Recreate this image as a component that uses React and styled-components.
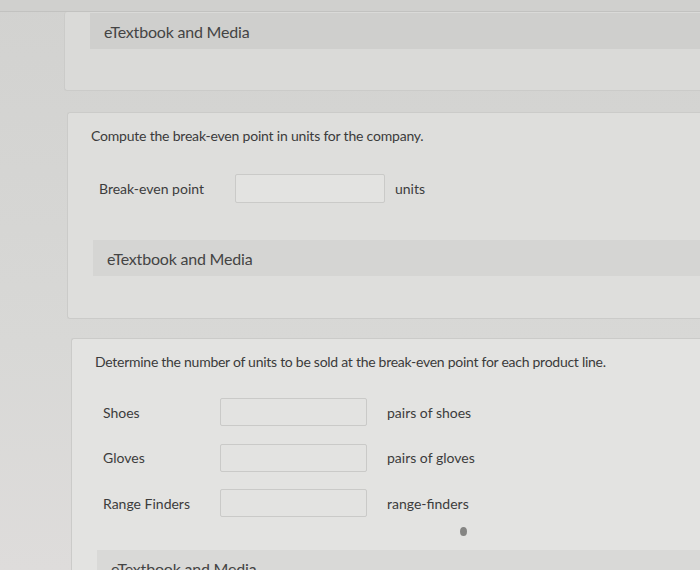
import React from "react"
import styled, { createGlobalStyle } from "styled-components"

const Global = createGlobalStyle`
  html, body {
    margin: 0;
    padding: 0;
    overflow: hidden;
    background: #d6d6d4;
  }
  body {
    font-family: Lato, "Open Sans", sans-serif;
    color: #3e3e3e;
  }
`

const Page = styled.div`
  width: 700px;
  height: 570px;
  overflow: hidden;
  background: linear-gradient(180deg, #d2d2d0 0%, #d8d8d6 60%, #dedcdb 100%);
`

const TopBand = styled.div`
  height: 11px;
  background: #d0d0ce;
  border-bottom: 1px solid #c2c2c0;
`

const Card = styled.section`
  margin-left: ${p => p.inset}px;
  margin-top: ${p => p.gap}px;
  width: 760px;
  background: ${p => p.tone};
  border: 1px solid #cbcbc9;
  border-right: none;
  border-top: ${p => (p.open ? "none" : "1px solid #cbcbc9")};
  border-radius: 3px 0 0 3px;
  padding: ${p => p.pad};
  box-sizing: border-box;
  height: ${p => p.h}px;
`

const MediaBar = styled.div`
  margin-left: 25px;
  margin-top: ${p => p.top}px;
  height: 36px;
  display: flex;
  align-items: center;
  padding-left: 14px;
  background: ${p => p.tone};
  font-size: 16px;
  color: #444;
  letter-spacing: -0.2px;
`

const Prompt = styled.p`
  margin: 0 0 0 23px;
  font-size: 14px;
  line-height: 20px;
  letter-spacing: ${p => p.tight || -0.2}px;
  color: #3b3b3b;
`

const Rows = styled.div`
  display: grid;
  grid-template-columns: ${p => p.label}px ${p => p.field}px auto;
  row-gap: ${p => p.rowGap}px;
  align-items: center;
  margin: ${p => p.top}px 0 0 31px;
`

const Label = styled.span`
  font-size: 14px;
  color: #3c3c3c;
`

const Field = styled.input`
  height: ${p => p.h || 28}px;
  box-sizing: border-box;
  border: 1px solid #cacac8;
  border-radius: 2px;
  background: #e3e3e1;
  outline: none;
  padding: 0 6px;
`

const Unit = styled.span`
  padding-left: ${p => p.gap}px;
  font-size: 14px;
  color: #3c3c3c;
`

const Dot = styled.span`
  display: block;
  width: 7px;
  height: 9px;
  border-radius: 50%;
  background: #858583;
  margin: 10px 0 0 388px;
`

const products = [
  { label: "Shoes", unit: "pairs of shoes" },
  { label: "Gloves", unit: "pairs of gloves" },
  { label: "Range Finders", unit: "range-finders" },
]

export default function App() {
  return (
    <Page>
      <Global />
      <TopBand />
      <Card inset={64} gap={0} tone="#dadad8" open h={79} pad="1px 0 0 0">
        <MediaBar top={0} tone="#cfcfcd">eTextbook and Media</MediaBar>
      </Card>

      <Card inset={67} gap={21} tone="#dededc" h={207} pad="13px 0 0 0">
        <Prompt>Compute the break-even point in units for the company.</Prompt>
        <Rows label={136} field={150} rowGap={18} top={28}>
          <Label>Break-even point</Label>
          <Field type="text" aria-label="Break-even point" h={29} />
          <Unit gap={10}>units</Unit>
        </Rows>
        <MediaBar top={37} tone="#d5d5d3">eTextbook and Media</MediaBar>
      </Card>

      <Card inset={71} gap={19} tone="#e3e3e1" h={260} pad="13px 0 0 0">
        <Prompt tight={-0.27}>Determine the number of units to be sold at the break-even point for each product line.</Prompt>
        <Rows label={117} field={147} rowGap={17.5} top={26}>
          {products.map(p => (
            <React.Fragment key={p.label}>
              <Label>{p.label}</Label>
              <Field type="text" aria-label={p.label} />
              <Unit gap={20}>{p.unit}</Unit>
            </React.Fragment>
          ))}
        </Rows>
        <Dot />
        <MediaBar top={14} tone="#d9d9d7">eTextbook and Media</MediaBar>
      </Card>
    </Page>
  )
}
